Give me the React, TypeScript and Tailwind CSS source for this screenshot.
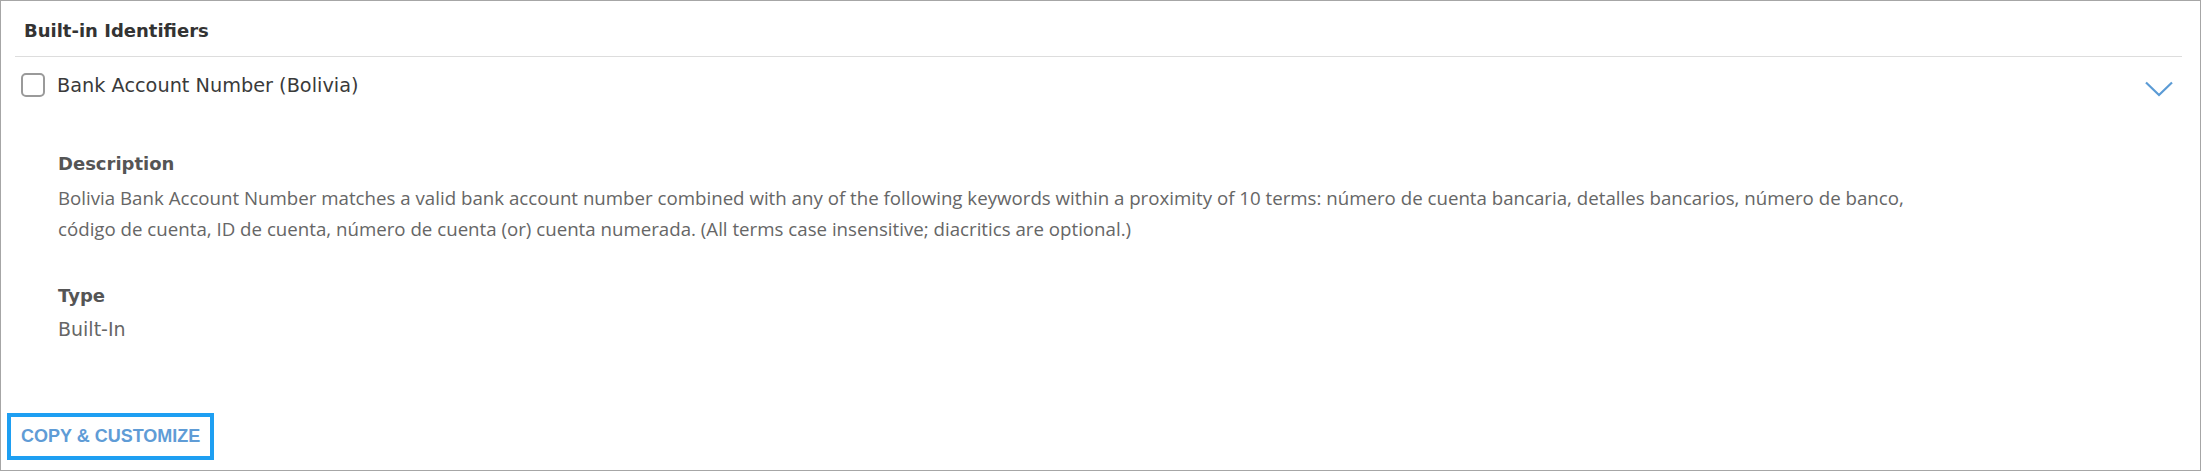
import React from "react";

export default function App() {
  return (
    <div className="w-[2201px] h-[471px] border border-[#a6a6a6] bg-white flex flex-col text-[#333]">
      <div className="pt-[18px] pl-[23px] h-[55px] text-[18px] leading-[24px] font-bold text-[#333] [font-family:'DejaVu_Sans',sans-serif]">
        Built-in Identifiers
      </div>
      <div className="ml-[14px] mr-[18px] h-px bg-[#dddddd]" />
      <div className="flex items-start mt-[16px] pl-[20px] pr-[27px]">
        <div className="w-[24px] h-[24px] rounded-[5px] border-2 border-[#9a9a9a] bg-white shrink-0" />
        <div className="ml-[12px] mt-[1px] text-[19.3px] leading-[24px] text-[#3a3a3a] [font-family:'DejaVu_Sans',sans-serif]">
          Bank Account Number (Bolivia)
        </div>
        <div className="flex-1" />
        <svg width="28" height="16" viewBox="0 0 28 16" className="mt-[8px]">
          <path d="M1 1.5 L14 14 L27 1.5" fill="none" stroke="#5b9bd5" strokeWidth="2.2" />
        </svg>
      </div>
      <div className="pl-[57px] mt-[54px]">
        <div className="text-[18px] leading-[24px] font-bold text-[#555] [font-family:'DejaVu_Sans',sans-serif]">
          Description
        </div>
        <div className="mt-[6px] text-[18.7px] leading-[31px] text-[#666] [font-family:'Open_Sans',sans-serif]">
          <div>
            Bolivia Bank Account Number matches a valid bank account number combined with any of the following keywords within a proximity of 10 terms: número de cuenta bancaria, detalles bancarios, número de banco,
          </div>
          <div>
            código de cuenta, ID de cuenta, número de cuenta (or) cuenta numerada. (All terms case insensitive; diacritics are optional.)
          </div>
        </div>
        <div className="mt-[40px] text-[18px] leading-[24px] font-bold text-[#555] [font-family:'DejaVu_Sans',sans-serif]">
          Type
        </div>
        <div className="mt-[9px] text-[19px] leading-[25px] text-[#666] [font-family:'DejaVu_Sans',sans-serif]">
          Built-In
        </div>
      </div>
      <div className="flex-1" />
      <div className="pl-[6px] pb-[10px]">
        <button className="border-4 border-[#1e9ff2] px-[10px] h-[47px] text-[18px] font-bold text-[#5f9cd6] [font-family:'Liberation_Sans',Arial,sans-serif] leading-[39px]">
          COPY &amp; CUSTOMIZE
        </button>
      </div>
    </div>
  );
}
